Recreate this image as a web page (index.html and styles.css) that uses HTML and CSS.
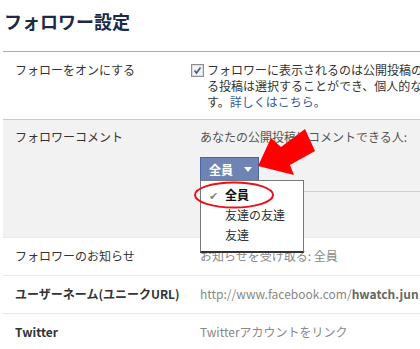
FILE: index.html
```html
<!DOCTYPE html>
<html lang="ja">
<head>
    <meta charset="UTF-8">
    <title>フォロワー設定</title>
    <link rel="stylesheet" href="styles.css">
</head>
<body>
    <div class="page">
        <h1 class="title">フォロワー設定</h1>

        <div class="row">
            <div class="label">フォローをオンにする</div>
            <div class="value desc">
                <div class="line">
                    <svg class="checkbox" width="13" height="13" viewBox="0 0 13 13">
                        <rect x="0.5" y="0.5" width="12" height="12" fill="#f4f4f4" stroke="#8e8f8f"/>
                        <rect x="1.5" y="1.5" width="10" height="10" fill="none" stroke="#dcdcdc"/>
                        <path d="M3.5 6.5 L5.5 9 L9.5 3.5" fill="none" stroke="#4a5f97" stroke-width="1.8"/>
                    </svg>
                    フォロワーに表示されるのは公開投稿のみです。フォロワーに表示され
                </div>
                <div class="line indent">る投稿は選択することができ、個人的な投稿は友達にのみ表示されま</div>
                <div class="line indent">す。<a href="#">詳しくはこちら。</a></div>
            </div>
        </div>

        <div class="row row-gray">
            <div class="label">フォロワーコメント</div>
            <div class="value">
                <div class="line sub">あなたの公開投稿にコメントできる人:</div>
                <div class="picker">
                    <button class="btn">全員 <span class="caret"></span></button>
                    <ul class="menu">
                        <li class="checked"><span class="tick">✔</span>全員</li>
                        <li>友達の友達</li>
                        <li>友達</li>
                    </ul>
                </div>
                <div class="subsection"></div>
            </div>
        </div>

        <div class="row">
            <div class="label">フォロワーのお知らせ</div>
            <div class="value muted">お知らせを受け取る: 全員</div>
        </div>

        <div class="row">
            <div class="label bold">ユーザーネーム(ユニークURL)</div>
            <div class="value muted">http://www.facebook.com/<b>hwatch.jun</b></div>
        </div>

        <div class="row">
            <div class="label bold">Twitter</div>
            <div class="value muted">Twitterアカウントをリンク</div>
        </div>
    </div>

    <svg class="marks" width="420" height="349" viewBox="0 0 420 349">
        <polygon points="258,166 271,138 281,147 305,129 315,151 290,165 294,175" fill="#ff0000"/>
        <ellipse cx="234" cy="195" rx="39" ry="12.5" fill="none" stroke="#e8101a" stroke-width="2"/>
    </svg>
</body>
</html>
```

FILE: styles.css
```css
* {
    margin: 0;
    padding: 0;
    box-sizing: border-box;
}

html, body {
    overflow: hidden;
}

body {
    background: #fff;
    font-family: "Noto Sans CJK JP", "Noto Sans", sans-serif;
    font-size: 12px;
    color: #333;
    position: relative;
    width: 420px;
    height: 349px;
}

.page {
    margin-left: 3px;
    width: 700px;
}

.title {
    font-size: 18px;
    line-height: 22px;
    font-weight: bold;
    color: #1c2a47;
    padding: 10px 0 19px 1px;
    border-bottom: 1px solid #aaa;
}

.row {
    display: flex;
    border-bottom: 1px solid #e9e9e9;
    padding: 10px 0 11px 12px;
    line-height: 16px;
}

.row:nth-of-type(1) {
    border-bottom-color: #c9c9c9;
}

.title + .row {
    padding: 10px 0 9px 12px;
    border-bottom-color: #c9c9c9;
}

.row-gray {
    background: #f2f2f2;
    padding: 9px 0 0 12px;
}

.label {
    width: 185px;
    flex-shrink: 0;
    color: #333;
}

.label.bold {
    font-weight: bold;
}

.value {
    flex: 1;
    white-space: nowrap;
}

.desc .line {
    display: flex;
    align-items: center;
}

.checkbox {
    margin-left: -9px;
    margin-right: 3px;
}

.indent {
    padding-left: 7px;
}

.desc a {
    color: #3b5998;
    text-decoration: none;
}

.sub {
    color: #555;
}

.picker {
    position: relative;
    margin-top: 12px;
    height: 24px;
}

.btn {
    display: flex;
    align-items: center;
    gap: 11px;
    height: 24px;
    width: 59px;
    padding-left: 8px;
    background: #6d84b4;
    border: 1px solid #4b66a0;
    color: #fff;
    font-family: inherit;
    font-size: 12px;
    font-weight: bold;
}

.caret {
    width: 0;
    height: 0;
    border-left: 4px solid transparent;
    border-right: 4px solid transparent;
    border-top: 5px solid #fff;
}

.menu {
    position: absolute;
    top: 23px;
    left: 0;
    width: 104px;
    list-style: none;
    background: #fff;
    border: 1px solid #777;
    border-bottom: 2px solid #333;
    padding: 4px 0 6px;
    z-index: 2;
}

.menu li {
    height: 20px;
    line-height: 20px;
    padding-left: 24px;
    position: relative;
    color: #333;
}

.menu li.checked {
    font-weight: bold;
    color: #111;
}

.tick {
    position: absolute;
    left: 8px;
    color: #888;
    font-weight: normal;
    font-size: 11px;
}

.subsection {
    margin-top: 10px;
    border-top: 1px solid #cfcfcf;
    height: 46px;
}

.muted {
    color: #888;
}

.muted b {
    color: #666;
}

.marks {
    position: absolute;
    top: 0;
    left: 0;
    pointer-events: none;
    z-index: 3;
}
```
